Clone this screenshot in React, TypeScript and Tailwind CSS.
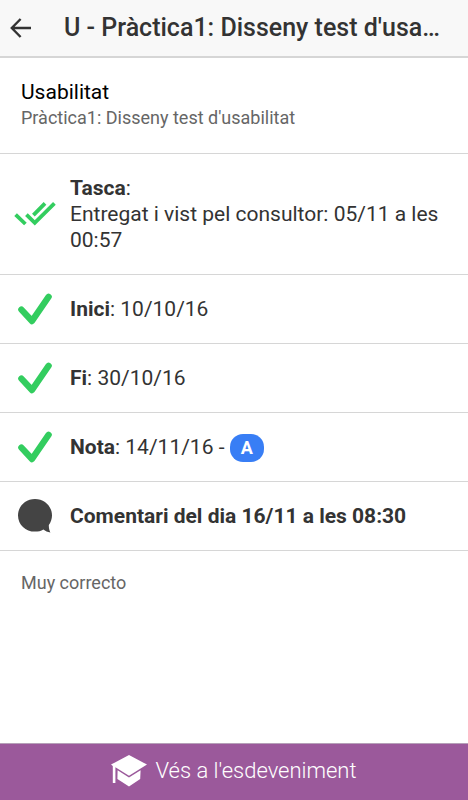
import type { ReactNode } from "react";

function BackArrow() {
  return (
    <svg viewBox="0 0 22 20" className="h-5 w-[22px]" fill="none" stroke="#333" strokeWidth="2.4" aria-hidden="true">
      <path d="M10.6 1 1.8 10l8.8 9M2 10h19" />
    </svg>
  );
}

function Check() {
  return (
    <svg viewBox="0 0 34 32" className="h-8 w-[34px]" fill="none" stroke="#33cd5f" strokeWidth="6.4" strokeLinecap="round" strokeLinejoin="round" aria-hidden="true">
      <path d="M3.4 16.6 14 28 30.6 3.8" />
    </svg>
  );
}

function DoubleCheck() {
  return (
    <svg viewBox="0 0 42 24" className="h-6 w-[42px]" fill="none" stroke="#33cd5f" strokeWidth="3.8" aria-hidden="true">
      <path d="M1.6 12.6 11.4 22M12.4 12.6l8.400 8.200L40.400 1.400M19.400 13.200 31 1.400" />
    </svg>
  );
}

function Bubble() {
  return (
    <svg viewBox="0 0 34 34" className="h-[34px] w-[34px]" fill="#444" aria-hidden="true">
      <path d="M17 0C7.6 0 0 7.2 0 16.4S7.6 32.600 17 32.600c3.200 0 6-.6 8.400-2.200 2 1.600 4 2.500 7 3-1.200-2.200-1.600-4.400-1.600-7.400 2-2.800 3.200-6 3.200-9.600C34 7.200 26.400 0 17 0Z" />
    </svg>
  );
}

function GraduationCap() {
  return (
    <svg viewBox="0 0 36 32" className="h-8 w-9" fill="#fff" aria-hidden="true">
      <path d="M18 0 36 9.600 18 20.800 4.400 12.200V28H1.800V11L0 9.600Z" />
      <path d="m6.600 15.200 11.400 7.400 11.600-7.400-.4 8.800L18 31.400 6.400 24Z" />
    </svg>
  );
}

function Row({ icon, children }: { icon: ReactNode; children: ReactNode }) {
  return (
    <li className="flex items-center border-b border-[#d6d6d6] pr-5">
      <div className="flex w-[70px] shrink-0 justify-center">{icon}</div>
      <div className="min-w-0 flex-1 py-[21px] text-[21px] leading-[26px]">{children}</div>
    </li>
  );
}

export default function App() {
  return (
    <div className="flex min-h-screen flex-col bg-white font-[Roboto,sans-serif] text-[#333]">
      <header className="flex h-[58px] shrink-0 items-center border-b-2 border-[#d6d6d6] bg-[#f8f8f8] pr-5 pl-[10px]">
        <button type="button" aria-label="Enrere" className="mr-8 shrink-0">
          <BackArrow />
        </button>
        <h1 className="min-w-0 truncate text-[25px] leading-8 font-medium">U - Pràctica1: Disseny test d'usa…</h1>
      </header>
      <main className="flex-1">
        <section className="border-b border-[#d6d6d6] px-[21px] pt-5 pb-[23px]">
          <h2 className="text-[21px] leading-7 text-black">Usabilitat</h2>
          <p className="text-[18px] leading-6 text-[#666]">Pràctica1: Disseny test d'usabilitat</p>
        </section>
        <ul>
          <Row icon={<DoubleCheck />}>
            <b className="font-bold">Tasca</b>:
            <br />
            Entregat i vist pel consultor: 05/11 a les 00:57
          </Row>
          <Row icon={<Check />}>
            <b className="font-bold">Inici</b>: 10/10/16
          </Row>
          <Row icon={<Check />}>
            <b className="font-bold">Fi</b>: 30/10/16
          </Row>
          <Row icon={<Check />}>
            <b className="font-bold">Nota</b>: 14/11/16 -{" "}
            <span className="-my-1 inline-block rounded-[13px] bg-[#387ef5] px-[11px] align-middle text-[18px] leading-7 font-bold text-white">A</span>
          </Row>
          <Row icon={<Bubble />}>
            <b className="font-bold">Comentari del dia 16/11 a les 08:30</b>
          </Row>
        </ul>
        <p className="px-[21px] py-5 text-[18px] leading-6 text-[#666]">Muy correcto</p>
      </main>
      <button type="button" className="flex h-[57px] shrink-0 items-center justify-center gap-2 border-t border-[#b6a0b8] bg-[#9b599b] pb-[3px] text-[22px] font-light text-white">
        <GraduationCap />
        Vés a l'esdeveniment
      </button>
    </div>
  );
}
